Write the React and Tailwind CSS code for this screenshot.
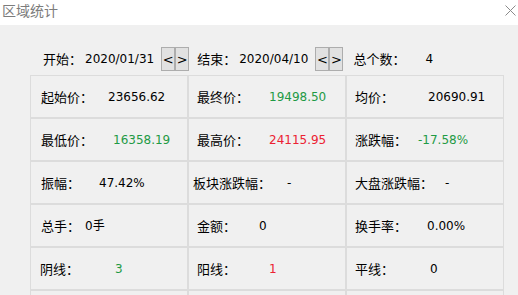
import React from "react";

const G = "text-[#1f9a45]";
const R = "text-[#ec2232]";

const rows = [
  { l: "起始价：", v: "23656.62", w: "w-[67px]", p: "pl-[10px]" },
  { l: "最终价：", v: "19498.50", w: "w-[72px]", c: G, p: "pl-[8px]" },
  { l: "均价：", v: "20690.91", w: "w-[73px]", p: "pl-[8px]" },
  { l: "最低价：", v: "16358.19", w: "w-[72px]", c: G, p: "pl-[10px]" },
  { l: "最高价：", v: "24115.95", w: "w-[72px]", c: R, p: "pl-[8px]" },
  { l: "涨跌幅：", v: "-17.58%", w: "w-[63px]", c: G, p: "pl-[8px]" },
  { l: "振幅：", v: "47.42%", w: "w-[58px]", p: "pl-[10px]" },
  { l: "板块涨跌幅：", v: "-", w: "w-[94px]", p: "pl-[4px]" },
  { l: "大盘涨跌幅：", v: "-", w: "w-[90px]", p: "pl-[8px]" },
  { l: "总手：", v: "0手", w: "w-[44px]", p: "pl-[10px]" },
  { l: "金额：", v: "0", w: "w-[62px]", p: "pl-[8px]" },
  { l: "换手率：", v: "0.00%", w: "w-[72px]", p: "pl-[8px]" },
  { l: "阴线：", v: "3", w: "w-[75px]", c: G, p: "pl-[9px]" },
  { l: "阳线：", v: "1", w: "w-[72px]", c: R, p: "pl-[8px]" },
  { l: "平线：", v: "0", w: "w-[75px]", p: "pl-[8px]" },
  { l: "", v: "", w: "w-[10px]", p: "pl-[10px]" },
  { l: "", v: "", w: "w-[10px]", p: "pl-[8px]" },
  { l: "", v: "", w: "w-[10px]", p: "pl-[8px]" },
];

const CJK = "font-['Noto_Sans_CJK_SC',sans-serif]";
const NUM = "font-['DejaVu_Sans','Noto_Sans_CJK_SC',sans-serif]";

function NavBtn({ ch }) {
  return (
    <span
      className={`flex h-[24px] w-[14px] items-center justify-center border border-[#adadad] bg-[#e1e1e1] text-[13px] leading-none text-black ${NUM}`}
    >
      {ch}
    </span>
  );
}

export default function App() {
  return (
    <div className="flex h-[295px] w-[518px] flex-col overflow-hidden bg-[#f0f0f0]">
      <div className="flex h-[25px] shrink-0 items-start justify-between bg-white px-[2px] pt-[1px]">
        <span className={`text-[14px] leading-[18px] text-[#7c7c7c] ${CJK}`}>区域统计</span>
        <svg width="11" height="11" viewBox="0 0 11 11" className="mt-[4px]">
          <path d="M0.5 0.5L10.5 10.5M10.5 0.5L0.5 10.5" stroke="#8a8a8a" strokeWidth="1" />
        </svg>
      </div>
      <div className="flex h-[50px] shrink-0 items-center pl-[43px] pt-[18px] text-[13px] text-black">
        <span className={CJK}>开始：</span>
        <span className={`ml-[3px] text-[12px] ${NUM}`}>2020/01/31</span>
        <span className="ml-[7px] flex">
          <NavBtn ch="<" />
          <NavBtn ch=">" />
        </span>
        <span className={`ml-[8px] ${CJK}`}>结束：</span>
        <span className={`ml-[3px] text-[12px] ${NUM}`}>2020/04/10</span>
        <span className="ml-[7px] flex">
          <NavBtn ch="<" />
          <NavBtn ch=">" />
        </span>
        <span className={`ml-[10px] ${CJK}`}>总个数：</span>
        <span className={`ml-[20px] text-[12px] ${NUM}`}>4</span>
      </div>
      <div className="ml-[30px] grid w-[474px] grid-cols-3 gap-[2px] border border-[#dcdcdc] bg-[#dcdcdc]">
        {rows.map((c, i) => (
          <div key={i} className={`flex h-[41px] items-center bg-[#f0f0f0] text-[13px] text-black ${c.p}`}>
            <span className={`shrink-0 ${c.w} ${CJK}`}>{c.l}</span>
            <span className={`text-[12px] ${c.c || "text-black"} ${NUM}`}>{c.v}</span>
          </div>
        ))}
      </div>
    </div>
  );
}
